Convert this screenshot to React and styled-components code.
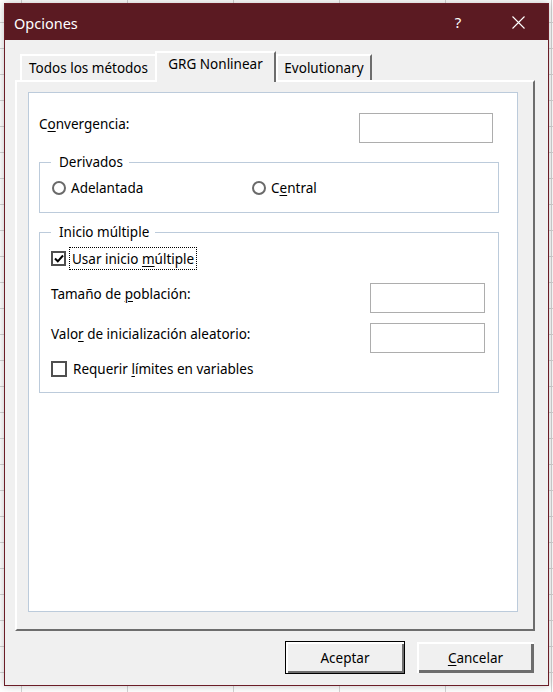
import React from "react";
import styled, { createGlobalStyle } from "styled-components";

const GlobalStyle = createGlobalStyle`
  html, body {
    margin: 0;
    padding: 0;
  }
  body {
    font-family: "Noto Sans", "Open Sans", sans-serif;
    color: #000;
  }
`;

const Desktop = styled.div`
  height: 692px;
  box-sizing: border-box;
  padding: 3px 0 0 4px;
  overflow: hidden;
  background-color: #fff;
  background-image:
    linear-gradient(to right, #d4d4d4 1px, transparent 1px),
    linear-gradient(to bottom, #d4d4d4 1px, transparent 1px);
  background-size: 106px 26px;
  background-position: 21px 22px;
`;

const Window = styled.div`
  width: 545px;
  height: 683px;
  box-sizing: border-box;
  border: 1px solid #6b1d27;
  background: #f0f0f0;
  display: flex;
  flex-direction: column;
  box-shadow: 0 0 8px rgba(0, 0, 0, 0.25);
`;

const TitleBar = styled.div`
  height: 36px;
  flex: none;
  background: #5b1a22;
  display: flex;
  align-items: center;
  padding-left: 9px;
  color: #fff;
`;

const Title = styled.div`
  font-size: 14.5px;
  line-height: 20px;
  padding-top: 1px;
  flex: 1;
`;

const CaptionButton = styled.div`
  width: 60px;
  height: 36px;
  display: flex;
  align-items: center;
  justify-content: center;
  font-size: 15px;
  color: #fff;
`;

const Body = styled.div`
  flex: 1;
  display: flex;
  flex-direction: column;
  padding: 11px 13px 0 10px;
`;

const TabStrip = styled.div`
  height: 29px;
  display: flex;
  align-items: flex-end;
  padding-left: 5px;
`;

const Tab = styled.div`
  width: ${(p) => p.$w}px;
  height: ${(p) => (p.$active ? 31 : 26)}px;
  box-sizing: border-box;
  margin: ${(p) => (p.$active ? "0 0 -2px -2px" : "0")};
  position: relative;
  z-index: ${(p) => (p.$active ? 1 : 0)};
  background: #f0f0f0;
  border-style: solid;
  border-width: 2px 2px 0 2px;
  border-color: #fff #6d6d6d transparent #fff;
  font-size: 13.5px;
  line-height: 20px;
  padding-top: ${(p) => (p.$active ? 1 : 2)}px;
  text-align: center;
  white-space: nowrap;
`;

const Panel = styled.div`
  height: 551px;
  box-sizing: border-box;
  border-style: solid;
  border-width: 2px;
  border-color: #fff #6d6d6d #6d6d6d #fff;
  padding: 10px 15px 17px 11px;
  display: flex;
`;

const Page = styled.div`
  flex: 1;
  background: #fff;
  border: 1px solid #bccbdb;
  padding: 20px 18px 0 10px;
  display: flex;
  flex-direction: column;
`;

const FieldRow = styled.div`
  display: flex;
  justify-content: space-between;
  align-items: flex-start;
  margin-top: ${(p) => p.$top || 0}px;
  padding-right: ${(p) => p.$right || 0}px;
`;

const Label = styled.div`
  font-size: 13.5px;
  line-height: 20px;
  padding-top: 1px;
  white-space: nowrap;
`;

const Key = styled.span`
  text-decoration: underline;
  text-underline-offset: 2px;
  text-decoration-thickness: 1px;
`;

const TextBox = styled.div`
  width: ${(p) => p.$w}px;
  height: 30px;
  box-sizing: border-box;
  border: 1px solid #adadad;
  background: #fff;
`;

const Group = styled.fieldset`
  margin: 9px 0 0;
  min-width: 0;
  border: 1px solid #bccbdb;
  padding: 0 13px 12px 11px;
`;

const Legend = styled.legend`
  padding: 0 6px 0 8px;
  font-size: 13.5px;
  line-height: 20px;
`;

const RadioRow = styled.div`
  display: grid;
  grid-template-columns: 200px auto;
  margin: 6px 0 2px;
`;

const Option = styled.div`
  display: flex;
  align-items: center;
  gap: 5px;
  font-size: 13.5px;
  line-height: 20px;
`;

const Radio = styled.span`
  width: 14px;
  height: 14px;
  box-sizing: border-box;
  margin-left: 1px;
  border: 2px solid #6a6a6a;
  border-radius: 50%;
  background: #fff;
`;

const CheckRow = styled.div`
  display: flex;
  align-items: center;
  gap: 3px;
  margin-top: ${(p) => p.$top}px;
`;

const Box = styled.span`
  width: ${(p) => p.$size}px;
  height: ${(p) => p.$size}px;
  box-sizing: border-box;
  border: 2px solid #4f4f4f;
  background: #fff;
  display: flex;
  align-items: center;
  justify-content: center;
`;

const CheckLabel = styled.span`
  border: 1px dotted ${(p) => (p.$focused ? "#000" : "transparent")};
  padding: 1px 2px 0;
  font-size: 13.5px;
  line-height: 20px;
  white-space: nowrap;
`;

const ButtonRow = styled.div`
  display: flex;
  justify-content: flex-end;
  gap: 11px;
  margin-top: 10px;
`;

const Button = styled.div`
  width: ${(p) => (p.$default ? 120 : 119)}px;
  height: 33px;
  box-sizing: border-box;
  border: 1px solid ${(p) => (p.$default ? "#000" : "transparent")};
  background: #f0f0f0;
  box-shadow: ${(p) =>
    p.$default
      ? "inset 2px 2px #fff, inset -2px -2px #6d6d6d"
      : "inset 2px 2px #fff, inset -3px -3px #6d6d6d"};
  display: flex;
  align-items: center;
  justify-content: center;
  font-size: 13.5px;
  line-height: 20px;
`;

function CloseIcon() {
  return (
    <svg width="13" height="13" viewBox="0 0 13 13">
      <path d="M0.5 0.5 L12.5 12.5 M12.5 0.5 L0.5 12.5" stroke="#fff" strokeWidth="1.1" fill="none" />
    </svg>
  );
}

function Check({ checked, size = 15 }) {
  return (
    <Box $size={size}>
      {checked && (
        <svg width="10" height="9" viewBox="0 0 10 9">
          <path d="M1 4.5 L3.8 7.3 L9 1.5" stroke="#000" strokeWidth="2" fill="none" />
        </svg>
      )}
    </Box>
  );
}

const tabs = [
  { label: "Todos los métodos", w: 137 },
  { label: "GRG Nonlinear", w: 121, active: true },
  { label: "Evolutionary", w: 96 },
];

export default function App() {
  return (
    <>
      <GlobalStyle />
      <Desktop>
        <Window>
          <TitleBar>
            <Title>Opciones</Title>
            <CaptionButton>?</CaptionButton>
            <CaptionButton>
              <CloseIcon />
            </CaptionButton>
          </TitleBar>
          <Body>
            <TabStrip>
              {tabs.map((t) => (
                <Tab key={t.label} $w={t.w} $active={t.active}>
                  {t.label}
                </Tab>
              ))}
            </TabStrip>
            <Panel>
              <Page>
                <FieldRow $right={6}>
                  <Label>
                    C<Key>o</Key>nvergencia:
                  </Label>
                  <TextBox $w={134} />
                </FieldRow>

                <Group>
                  <Legend>Derivados</Legend>
                  <RadioRow>
                    <Option>
                      <Radio />
                      <span>Adelantada</span>
                    </Option>
                    <Option>
                      <Radio />
                      <span>
                        C<Key>e</Key>ntral
                      </span>
                    </Option>
                  </RadioRow>
                </Group>

                <Group>
                  <Legend>Inicio múltiple</Legend>
                  <CheckRow $top={5}>
                    <Check checked />
                    <CheckLabel $focused>
                      Usar inicio <Key>m</Key>últiple
                    </CheckLabel>
                  </CheckRow>
                  <FieldRow $top={13}>
                    <Label>
                      Tamaño de <Key>p</Key>oblación:
                    </Label>
                    <TextBox $w={115} />
                  </FieldRow>
                  <FieldRow $top={10}>
                    <Label>
                      Valo<Key>r</Key> de inicialización aleatorio:
                    </Label>
                    <TextBox $w={115} />
                  </FieldRow>
                  <CheckRow $top={4}>
                    <Check size={16} />
                    <CheckLabel>
                      Requerir <Key>l</Key>ímites en variables
                    </CheckLabel>
                  </CheckRow>
                </Group>
              </Page>
            </Panel>
            <ButtonRow>
              <Button $default>Aceptar</Button>
              <Button>
                <span>
                  <Key>C</Key>ancelar
                </span>
              </Button>
            </ButtonRow>
          </Body>
        </Window>
      </Desktop>
    </>
  );
}
